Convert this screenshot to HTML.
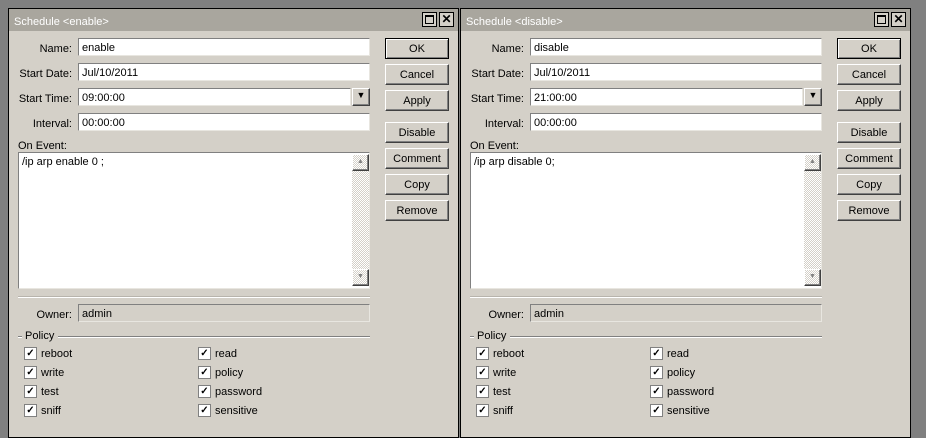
<!DOCTYPE html>
<html><head><meta charset="utf-8"><style>
*{margin:0;padding:0;box-sizing:border-box}
body{width:926px;height:431px;background:#808080;position:relative;overflow:hidden;font-family:"Liberation Sans",sans-serif;font-size:11px;color:#000}
.dlg{position:absolute;top:8px;width:451px;height:430px;background:#d4d0c8;border:1px solid #000}
.title{position:absolute;left:0;top:0;right:0;height:22px;background:#a9a69e;color:#fff;padding:7px 0 0 5px;font-size:11px}
.tb{position:absolute;top:3px;width:15px;height:15px;border:1px solid #000;background:#d4d0c8}
.a{position:absolute}
.lbl{position:absolute;text-align:right;width:70px}
.inp{position:absolute;background:#fff;border:1px solid #808080;border-right-color:#e8e6e0;border-bottom-color:#e8e6e0;height:18px;padding:3px 0 0 3px}
.btn{position:absolute;width:64px;height:21px;border:1px solid #fff;border-right-color:#404040;border-bottom-color:#404040;text-align:center;padding-top:4px;box-shadow:inset -1px -1px 0 #808080}
.cb{position:absolute;width:13px;height:13px;border:1px solid #808080;background:#fff;font-size:10px;line-height:11px;text-align:center;font-weight:bold}
.ck{position:absolute}
</style></head><body>
<div class="dlg" style="left:8px">
 <div class="title">Schedule &lt;enable&gt;</div>
 <div class="tb" style="left:413px"><div style="position:absolute;left:2px;top:2px;width:9px;height:9px;border:1px solid #000;border-top-width:2px"></div></div>
 <div class="tb" style="left:430px;font-weight:bold;font-size:12px;line-height:12px;text-align:center">✕</div>
 <div class="lbl" style="left:-7px;top:34px">Name:</div><div class="inp" style="left:69px;top:29px;width:292px">enable</div>
 <div class="lbl" style="left:-7px;top:59px">Start Date:</div><div class="inp" style="left:69px;top:54px;width:292px">Jul/10/2011</div>
 <div class="lbl" style="left:-7px;top:84px">Start Time:</div><div class="inp" style="left:69px;top:79px;width:273px">09:00:00</div>
 <div class="btn" style="left:343px;top:79px;width:18px;height:18px;padding-top:1px;font-size:9px">▼</div>
 <div class="lbl" style="left:-7px;top:109px">Interval:</div><div class="inp" style="left:69px;top:104px;width:292px">00:00:00</div>
 <div class="a" style="left:9px;top:131px">On Event:</div>
 <div class="inp" style="left:9px;top:143px;width:352px;height:137px;padding:3px">/ip arp enable 0 ;</div>
 <div class="a" style="left:343px;top:145px;width:17px;height:132px;background:repeating-conic-gradient(#d4d0c8 0 25%,#fff 0 50%) 0 0/2px 2px"></div>
 <div class="btn" style="left:343px;top:145px;width:17px;height:17px;font-size:7px;padding-top:3px;color:#808080">▲</div>
 <div class="btn" style="left:343px;top:260px;width:17px;height:17px;font-size:7px;padding-top:3px;color:#808080">▼</div>
 <div class="a" style="left:9px;top:287px;width:352px;border-top:1px solid #b8b4ac;border-bottom:1px solid #fff"></div>
 <div class="lbl" style="left:-7px;top:300px">Owner:</div><div class="inp" style="left:69px;top:295px;width:292px;background:#d4d0c8">admin</div>
 <div class="a" style="left:9px;top:327px;width:352px;border-top:1px solid #808080;border-bottom:1px solid #fff"></div>
 <div class="a" style="left:13px;top:321px;background:#d4d0c8;padding:0 4px 0 3px">Policy</div>
 <div class="cb" style="left:15px;top:338px">✓</div><div class="ck" style="left:32px;top:339px">reboot</div>
 <div class="cb" style="left:15px;top:357px">✓</div><div class="ck" style="left:32px;top:358px">write</div>
 <div class="cb" style="left:15px;top:376px">✓</div><div class="ck" style="left:32px;top:377px">test</div>
 <div class="cb" style="left:15px;top:395px">✓</div><div class="ck" style="left:32px;top:396px">sniff</div>
 <div class="cb" style="left:189px;top:338px">✓</div><div class="ck" style="left:206px;top:339px">read</div>
 <div class="cb" style="left:189px;top:357px">✓</div><div class="ck" style="left:206px;top:358px">policy</div>
 <div class="cb" style="left:189px;top:376px">✓</div><div class="ck" style="left:206px;top:377px">password</div>
 <div class="cb" style="left:189px;top:395px">✓</div><div class="ck" style="left:206px;top:396px">sensitive</div>
 <div class="btn" style="left:376px;top:29px;border:1px solid #000;box-shadow:inset 1px 1px 0 #fff,inset -1px -1px 0 #808080">OK</div>
 <div class="btn" style="left:376px;top:55px">Cancel</div>
 <div class="btn" style="left:376px;top:81px">Apply</div>
 <div class="btn" style="left:376px;top:113px">Disable</div>
 <div class="btn" style="left:376px;top:139px">Comment</div>
 <div class="btn" style="left:376px;top:165px">Copy</div>
 <div class="btn" style="left:376px;top:191px">Remove</div>
</div>
<div class="dlg" style="left:460px">
 <div class="title">Schedule &lt;disable&gt;</div>
 <div class="tb" style="left:413px"><div style="position:absolute;left:2px;top:2px;width:9px;height:9px;border:1px solid #000;border-top-width:2px"></div></div>
 <div class="tb" style="left:430px;font-weight:bold;font-size:12px;line-height:12px;text-align:center">✕</div>
 <div class="lbl" style="left:-7px;top:34px">Name:</div><div class="inp" style="left:69px;top:29px;width:292px">disable</div>
 <div class="lbl" style="left:-7px;top:59px">Start Date:</div><div class="inp" style="left:69px;top:54px;width:292px">Jul/10/2011</div>
 <div class="lbl" style="left:-7px;top:84px">Start Time:</div><div class="inp" style="left:69px;top:79px;width:273px">21:00:00</div>
 <div class="btn" style="left:343px;top:79px;width:18px;height:18px;padding-top:1px;font-size:9px">▼</div>
 <div class="lbl" style="left:-7px;top:109px">Interval:</div><div class="inp" style="left:69px;top:104px;width:292px">00:00:00</div>
 <div class="a" style="left:9px;top:131px">On Event:</div>
 <div class="inp" style="left:9px;top:143px;width:352px;height:137px;padding:3px">/ip arp disable 0;</div>
 <div class="a" style="left:343px;top:145px;width:17px;height:132px;background:repeating-conic-gradient(#d4d0c8 0 25%,#fff 0 50%) 0 0/2px 2px"></div>
 <div class="btn" style="left:343px;top:145px;width:17px;height:17px;font-size:7px;padding-top:3px;color:#808080">▲</div>
 <div class="btn" style="left:343px;top:260px;width:17px;height:17px;font-size:7px;padding-top:3px;color:#808080">▼</div>
 <div class="a" style="left:9px;top:287px;width:352px;border-top:1px solid #b8b4ac;border-bottom:1px solid #fff"></div>
 <div class="lbl" style="left:-7px;top:300px">Owner:</div><div class="inp" style="left:69px;top:295px;width:292px;background:#d4d0c8">admin</div>
 <div class="a" style="left:9px;top:327px;width:352px;border-top:1px solid #808080;border-bottom:1px solid #fff"></div>
 <div class="a" style="left:13px;top:321px;background:#d4d0c8;padding:0 4px 0 3px">Policy</div>
 <div class="cb" style="left:15px;top:338px">✓</div><div class="ck" style="left:32px;top:339px">reboot</div>
 <div class="cb" style="left:15px;top:357px">✓</div><div class="ck" style="left:32px;top:358px">write</div>
 <div class="cb" style="left:15px;top:376px">✓</div><div class="ck" style="left:32px;top:377px">test</div>
 <div class="cb" style="left:15px;top:395px">✓</div><div class="ck" style="left:32px;top:396px">sniff</div>
 <div class="cb" style="left:189px;top:338px">✓</div><div class="ck" style="left:206px;top:339px">read</div>
 <div class="cb" style="left:189px;top:357px">✓</div><div class="ck" style="left:206px;top:358px">policy</div>
 <div class="cb" style="left:189px;top:376px">✓</div><div class="ck" style="left:206px;top:377px">password</div>
 <div class="cb" style="left:189px;top:395px">✓</div><div class="ck" style="left:206px;top:396px">sensitive</div>
 <div class="btn" style="left:376px;top:29px;border:1px solid #000;box-shadow:inset 1px 1px 0 #fff,inset -1px -1px 0 #808080">OK</div>
 <div class="btn" style="left:376px;top:55px">Cancel</div>
 <div class="btn" style="left:376px;top:81px">Apply</div>
 <div class="btn" style="left:376px;top:113px">Disable</div>
 <div class="btn" style="left:376px;top:139px">Comment</div>
 <div class="btn" style="left:376px;top:165px">Copy</div>
 <div class="btn" style="left:376px;top:191px">Remove</div>
</div>
</body></html>
